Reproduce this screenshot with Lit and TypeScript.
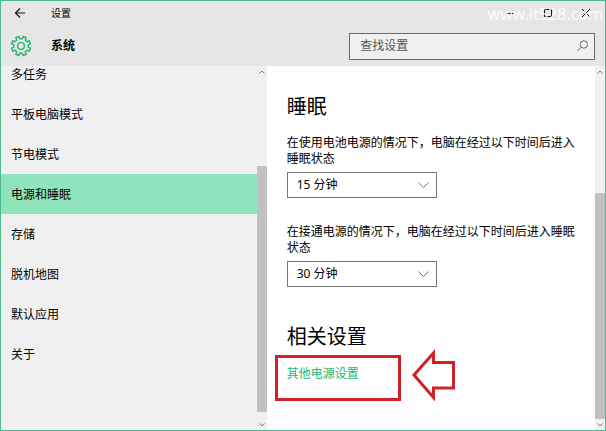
import { LitElement, html, css } from "lit";
import { customElement, property, state } from "lit/decorators.js";
import { classMap } from "lit/directives/class-map.js";

const GEAR_TEETH = 8;

function gearPath(cx: number, cy: number, outer: number, inner: number): string {
  const points: string[] = [];
  const step = (Math.PI * 2) / GEAR_TEETH;
  for (let i = 0; i < GEAR_TEETH; i++) {
    const a = i * step - Math.PI / 2 + step / 2;
    const corners: [number, number][] = [
      [a - step * 0.27, inner],
      [a - step * 0.22, outer],
      [a + step * 0.22, outer],
      [a + step * 0.27, inner],
    ];
    for (const [angle, r] of corners) {
      points.push(`${(cx + Math.cos(angle) * r).toFixed(2)} ${(cy + Math.sin(angle) * r).toFixed(2)}`);
    }
  }
  return `M${points.join("L")}Z`;
}

@customElement("scroll-rail")
export class ScrollRail extends LitElement {
  @property({ type: Number }) before = 0;
  @property({ type: Number }) after = 0;

  static styles = css`
    :host {
      display: flex;
      flex-direction: column;
      width: 10px;
      flex: none;
      background: #f0f0f0;
    }
    .end {
      height: 11px;
      display: flex;
      align-items: center;
      justify-content: center;
      flex: none;
    }
    svg {
      width: 6px;
      height: 4px;
      fill: none;
      stroke: #777;
    }
    .track {
      flex: 1;
      display: flex;
      flex-direction: column;
    }
    .thumb {
      flex: 1;
      background: #c2c1c2;
    }
  `;

  render() {
    return html`
      <div class="end"><svg viewBox="0 0 6 4"><path d="M.5 3.5 3 1l2.5 2.5" /></svg></div>
      <div class="track">
        <div style="height:${this.before}%"></div>
        <div class="thumb"></div>
        <div style="height:${this.after}%"></div>
      </div>
      <div class="end"><svg viewBox="0 0 6 4"><path d="M.5.5 3 3 5.5.5" /></svg></div>
    `;
  }
}

@customElement("app-root")
export class AppRoot extends LitElement {
  @state() private current = "电源和睡眠";

  private pages = ["多任务", "平板电脑模式", "节电模式", "电源和睡眠", "存储", "脱机地图", "默认应用", "关于"];

  static styles = css`
    * {
      box-sizing: border-box;
    }
    :host {
      display: flex;
      flex-direction: column;
      min-height: 100vh;
      box-sizing: border-box;
      border: 1px solid #4db88a;
      background: #fff;
      color: #000;
      font: 12px/16px "Noto Sans", "Noto Sans CJK SC", sans-serif;
    }
    button,
    input,
    select {
      font: inherit;
      color: inherit;
      border-radius: 0;
      margin: 0;
    }
    header {
      background: #e6e6e6;
      position: relative;
    }
    .titlebar {
      display: flex;
      align-items: center;
      height: 24px;
    }
    .icon-button {
      width: 38px;
      height: 24px;
      padding: 0;
      border: 0;
      background: none;
      display: flex;
      align-items: center;
      justify-content: center;
    }
    .icon-button svg {
      width: 12px;
      height: 12px;
      fill: none;
      stroke: #111;
    }
    .caption {
      font-size: 10px;
      flex: 1;
      margin-left: 12px;
    }
    .watermark {
      position: absolute;
      top: 2px;
      right: 2px;
      font-size: 16px;
      line-height: 22px;
      color: #fff;
      opacity: 0.9;
      pointer-events: none;
    }
    .toolbar {
      display: flex;
      align-items: center;
      height: 41px;
      padding: 1px 10px 0 9px;
    }
    .gear {
      width: 22px;
      height: 22px;
      fill: none;
      stroke: #20b872;
      stroke-width: 1.4;
      stroke-linejoin: round;
    }
    h1 {
      flex: 1;
      margin: 0 0 0 19px;
      font-size: 12px;
      font-weight: 700;
    }
    .search {
      display: flex;
      align-items: center;
      width: 42%;
      height: 27px;
      border: 1px solid #6c6c6c;
      background: #f0f0f0;
      padding: 0 6px 0 10px;
    }
    .search input {
      flex: 1;
      min-width: 0;
      border: 0;
      padding: 0;
      background: none;
      outline: none;
    }
    .search input::placeholder {
      color: #555;
      opacity: 1;
    }
    .search svg {
      width: 11px;
      height: 12px;
      fill: none;
      stroke: #666;
    }
    .body {
      flex: 1;
      display: flex;
    }
    nav {
      flex: 0 0 44%;
      display: flex;
      background: #f0f0f0;
      overflow: hidden;
    }
    ul {
      list-style: none;
      flex: 1;
      margin: -12px 0 0;
      padding: 0;
    }
    .page {
      display: flex;
      align-items: center;
      height: 40px;
      padding: 1px 10px 0;
      color: inherit;
      text-decoration: none;
    }
    .page.active {
      background: #90e4bb;
    }
    main {
      flex: 1;
      min-width: 0;
      padding: 29px 8px 28px 20px;
    }
    h2 {
      margin: 0;
      font-size: 20px;
      line-height: 24px;
      font-weight: 400;
    }
    .field {
      display: block;
      margin: 16px 0 26px;
    }
    .field + .field {
      margin: 0 0 38px;
    }
    .label {
      display: block;
      width: 299px;
      max-width: 100%;
      margin-bottom: 5px;
    }
    .picker {
      display: grid;
      width: 150px;
      align-items: center;
    }
    .picker > * {
      grid-area: 1 / 1;
    }
    select {
      appearance: none;
      width: 100%;
      height: 26px;
      padding: 0 9px;
      border: 1px solid #777;
      background: #fff;
    }
    .picker svg {
      justify-self: end;
      width: 11px;
      height: 6px;
      margin-right: 8px;
      fill: none;
      stroke: #777;
      pointer-events: none;
    }
    .callout {
      display: flex;
      align-items: flex-end;
      gap: 11px;
      margin-left: -12px;
    }
    .frame {
      width: 126px;
      height: 46px;
      border: 3px solid #cf2229;
      padding: 8px 9px;
    }
    .frame a {
      color: #20b872;
      text-decoration: none;
    }
    .arrow {
      width: 44px;
      height: 52px;
      fill: none;
      stroke: #cf2229;
      stroke-width: 3;
    }
  `;

  private renderPicker(label: string, value: string) {
    return html`
      <label class="field">
        <span class="label">${label}</span>
        <span class="picker">
          <select>
            ${["15 分钟", "30 分钟"].map((o) => html`<option ?selected=${o === value}>${o}</option>`)}
          </select>
          <svg viewBox="0 0 11 6"><path d="M.5.5 5.5 5.5l5-5" /></svg>
        </span>
      </label>
    `;
  }

  render() {
    return html`
      <header>
        <div class="titlebar">
          <button class="icon-button" aria-label="返回">
            <svg viewBox="0 0 12 12"><path d="M11 6H1.5M6 1.5 1.5 6 6 10.5" stroke-width="1.2" /></svg>
          </button>
          <span class="caption">设置</span>
          <button class="icon-button" aria-label="最小化">
            <svg viewBox="0 0 12 12"><path d="M2 6.5h8" /></svg>
          </button>
          <button class="icon-button" aria-label="最大化">
            <svg viewBox="0 0 12 12"><path d="M2.5 2.500h7v7h-7z" /></svg>
          </button>
          <button class="icon-button" aria-label="关闭">
            <svg viewBox="0 0 12 12"><path d="m2 2 8 8M10 2l-8 8" /></svg>
          </button>
        </div>
        <div class="toolbar">
          <svg class="gear" viewBox="0 0 22 22">
            <path d=${gearPath(11, 11, 9.8, 7.4)} />
            <circle cx="11" cy="11" r="3.4" />
          </svg>
          <h1>系统</h1>
          <div class="search">
            <input type="text" placeholder="查找设置" aria-label="查找设置" />
            <svg viewBox="0 0 11 12"><circle cx="6.8" cy="4.5" r="3.7" /><path d="M4.2 7.2.5 11" /></svg>
          </div>
        </div>
        <span class="watermark">www.it528.com</span>
      </header>
      <div class="body">
        <nav>
          <ul>
            ${this.pages.map(
              (name) => html`<li>
                <a
                  href="#"
                  class=${classMap({ page: true, active: name === this.current })}
                  @click=${(e: Event) => {
                    e.preventDefault();
                    this.current = name;
                  }}
                  >${name}</a
                >
              </li>`
            )}
          </ul>
          <scroll-rail .before=${26} .after=${2}></scroll-rail>
        </nav>
        <main>
          <h2>睡眠</h2>
          ${this.renderPicker("在使用电池电源的情况下，电脑在经过以下时间后进入睡眠状态", "15 分钟")}
          ${this.renderPicker("在接通电源的情况下，电脑在经过以下时间后进入睡眠状态", "30 分钟")}
          <h2>相关设置</h2>
          <div class="callout">
            <div class="frame"><a href="#">其他电源设置</a></div>
            <svg class="arrow" viewBox="0 0 44 52">
              <path d="M2 26 21.5 4v9.500h20v25.500h-20v9.500z" />
            </svg>
          </div>
        </main>
        <scroll-rail .before=${34} .after=${0}></scroll-rail>
      </div>
    `;
  }
}
